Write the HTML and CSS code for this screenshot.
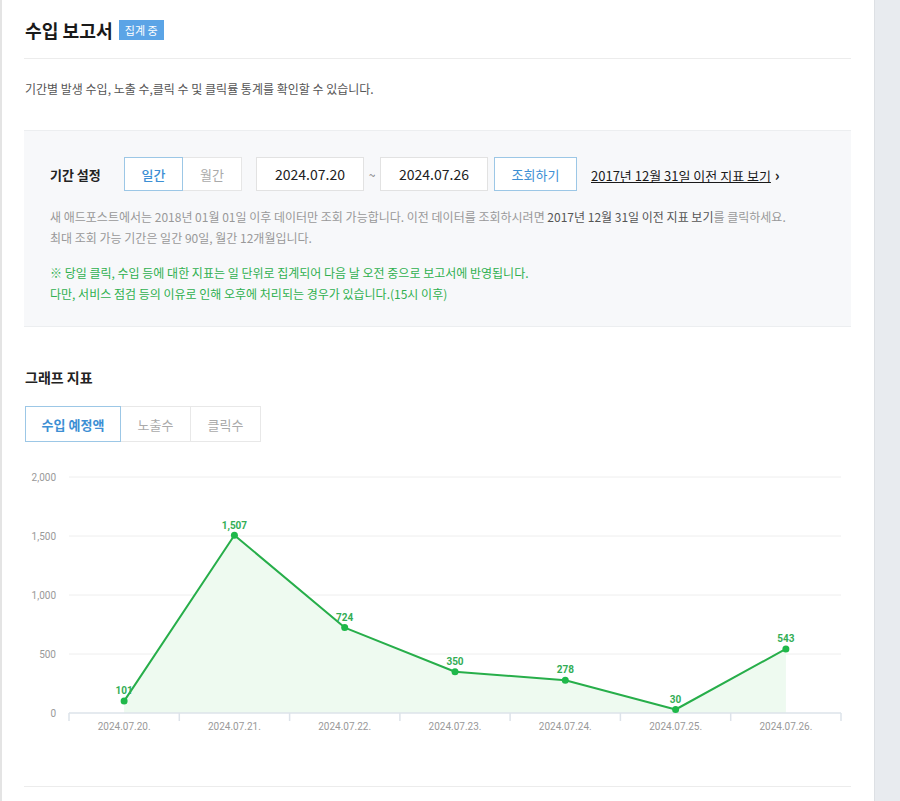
FILE: index.html
```html
<!DOCTYPE html>
<html>
<head>
    <meta charset="utf-8">
    <title>수입 보고서</title>
    <link rel="stylesheet" href="styles.css">
</head>
<body>
    <div class="page">
        <div class="content">
            <div class="report-header">
                <h1>수입 보고서</h1>
                <span class="badge">집계 중</span>
            </div>
            <p class="desc">기간별 발생 수입, 노출 수,클릭 수 및 클릭률 통계를 확인할 수 있습니다.</p>

            <div class="filter-box">
                <div class="filter-row">
                    <span class="filter-label">기간 설정</span>
                    <div class="toggle">
                        <button class="toggle-btn active">일간</button>
                        <button class="toggle-btn">월간</button>
                    </div>
                    <div class="date-range">
                        <div class="date-input">2024.07.20</div>
                        <span class="tilde">~</span>
                        <div class="date-input">2024.07.26</div>
                    </div>
                    <button class="search-btn">조회하기</button>
                    <a class="old-link" href="#"><span>2017년 12월 31일 이전 지표 보기</span> <b>›</b></a>
                </div>
                <div class="info">
                    <p>새 애드포스트에서는 2018년 01월 01일 이후 데이터만 조회 가능합니다. 이전 데이터를 조회하시려면 <em>2017년 12월 31일 이전 지표 보기</em>를 클릭하세요.</p>
                    <p>최대 조회 가능 기간은 일간 90일, 월간 12개월입니다.</p>
                </div>
                <div class="notice">
                    <p>※ 당일 클릭, 수입 등에 대한 지표는 일 단위로 집계되어 다음 날 오전 중으로 보고서에 반영됩니다.</p>
                    <p>다만, 서비스 점검 등의 이유로 인해 오후에 처리되는 경우가 있습니다.(15시 이후)</p>
                </div>
            </div>

            <h2 class="section-title">그래프 지표</h2>
            <div class="tabs">
                <button class="tab active">수입 예정액</button>
                <button class="tab">노출수</button>
                <button class="tab">클릭수</button>
            </div>

            <div class="chart">
                <svg width="827" height="280" viewBox="0 0 827 280">
                    <g class="grid">
                        <line x1="45" y1="17" x2="817" y2="17"/>
                        <line x1="45" y1="76" x2="817" y2="76"/>
                        <line x1="45" y1="135" x2="817" y2="135"/>
                        <line x1="45" y1="194" x2="817" y2="194"/>
                    </g>
                    <g class="y-labels">
                        <text x="32" y="21">2,000</text>
                        <text x="32" y="80">1,500</text>
                        <text x="32" y="139">1,000</text>
                        <text x="32" y="198">500</text>
                        <text x="32" y="257">0</text>
                    </g>
                    <polygon class="area" points="100.1,241.1 210.4,75.2 320.7,167.6 431,211.7 541.3,220.2 651.6,249.5 761.9,188.9 761.9,253 100.1,253"/>
                    <polyline class="line" points="100.1,241.1 210.4,75.2 320.7,167.6 431,211.7 541.3,220.2 651.6,249.5 761.9,188.9"/>
                    <g class="axis">
                        <line x1="45" y1="253" x2="817" y2="253"/>
                        <line x1="45" y1="253" x2="45" y2="261"/>
                        <line x1="155.3" y1="253" x2="155.3" y2="261"/>
                        <line x1="265.6" y1="253" x2="265.6" y2="261"/>
                        <line x1="375.9" y1="253" x2="375.9" y2="261"/>
                        <line x1="486.1" y1="253" x2="486.1" y2="261"/>
                        <line x1="596.4" y1="253" x2="596.4" y2="261"/>
                        <line x1="706.7" y1="253" x2="706.7" y2="261"/>
                        <line x1="817" y1="253" x2="817" y2="261"/>
                    </g>
                    <g class="dots">
                        <circle cx="100.1" cy="241.1" r="3.5"/>
                        <circle cx="210.4" cy="75.2" r="3.5"/>
                        <circle cx="320.7" cy="167.6" r="3.5"/>
                        <circle cx="431" cy="211.7" r="3.5"/>
                        <circle cx="541.3" cy="220.2" r="3.5"/>
                        <circle cx="651.6" cy="249.5" r="3.5"/>
                        <circle cx="761.9" cy="188.9" r="3.5"/>
                    </g>
                    <g class="values">
                        <text x="100.1" y="234">101</text>
                        <text x="210.4" y="69">1,507</text>
                        <text x="320.7" y="161">724</text>
                        <text x="431" y="205">350</text>
                        <text x="541.3" y="213">278</text>
                        <text x="651.6" y="243">30</text>
                        <text x="761.9" y="182">543</text>
                    </g>
                    <g class="x-labels">
                        <text x="100.1" y="270">2024.07.20.</text>
                        <text x="210.4" y="270">2024.07.21.</text>
                        <text x="320.7" y="270">2024.07.22.</text>
                        <text x="431" y="270">2024.07.23.</text>
                        <text x="541.3" y="270">2024.07.24.</text>
                        <text x="651.6" y="270">2024.07.25.</text>
                        <text x="761.9" y="270">2024.07.26.</text>
                    </g>
                </svg>
            </div>
            <div class="bottom-rule"></div>
        </div>
        <div class="side"></div>
    </div>
</body>
</html>
```

FILE: styles.css
```css
html, body {
    margin: 0;
    padding: 0;
    background: #ffffff;
}
body {
    font-family: "Noto Sans CJK KR", "Noto Sans", sans-serif;
    color: #222;
}
.page {
    display: flex;
    min-height: 801px;
}
.content {
    flex: 1;
    border-left: 2px solid #e4e4e4;
    padding: 0 23px 0 22px;
}
.side {
    width: 25px;
    background: #e8ebef;
    border-left: 1px solid #dde0e4;
}
.report-header {
    display: flex;
    align-items: center;
    padding: 16px 0 14px 1px;
    border-bottom: 1px solid #ececec;
}
h1 {
    margin: 0;
    font-size: 18.2px;
    line-height: 28px;
    font-weight: 700;
    color: #1a1a1a;
}
.badge {
    margin-left: 6px;
    height: 20px;
    line-height: 20px;
    padding: 0 6px;
    background: #5ba4e6;
    color: #fff;
    font-size: 11px;
}
.desc {
    margin: 21px 0 32px 1px;
    font-size: 12px;
    line-height: 18px;
    color: #555;
}
.filter-box {
    background: #f7f8fa;
    border-top: 1px solid #eceef0;
    border-bottom: 1px solid #eceef0;
    padding: 26px 26px 22px;
}
.filter-row {
    display: flex;
    align-items: center;
    height: 34px;
}
.filter-label {
    width: 74px;
    font-size: 13px;
    font-weight: 700;
    color: #222;
}
.toggle {
    display: flex;
}
button {
    font-family: inherit;
    cursor: pointer;
    background: #fff;
}
.toggle-btn {
    width: 59px;
    height: 34px;
    font-size: 13px;
    color: #aaa;
    border: 1px solid #e6e6e6;
    padding: 0;
}
.toggle-btn + .toggle-btn {
    border-left: none;
}
.toggle-btn.active {
    color: #3d8fd4;
    border-color: #9cc7e6;
    font-weight: 500;
}
.date-range {
    display: flex;
    align-items: center;
    margin-left: 14px;
}
.date-input {
    width: 106px;
    height: 32px;
    line-height: 32px;
    border: 1px solid #e2e2e2;
    background: #fff;
    text-align: center;
    font-size: 14px;
    color: #222;
}
.tilde {
    width: 16px;
    text-align: center;
    font-size: 12px;
    color: #777;
}
.search-btn {
    margin-left: 6px;
    width: 83px;
    height: 34px;
    font-size: 13px;
    color: #3d8fd4;
    border: 1px solid #9cc7e6;
    padding: 0;
}
.old-link {
    margin-left: 14px;
    font-size: 13px;
    font-weight: 400;
    color: #1a1a1a;
    text-decoration: none;
}
.old-link span {
    text-decoration: underline;
}
.old-link b {
    font-size: 15px;
    margin-left: 1px;
}
.info {
    margin-top: 15px;
}
.info p, .notice p {
    margin: 0;
    font-size: 12px;
    line-height: 21px;
}
.info p {
    color: #999;
}
.info em {
    font-style: normal;
    color: #555;
}
.notice {
    margin-top: 14px;
}
.notice p {
    color: #2fb04f;
}
.section-title {
    margin: 40px 0 0 1px;
    font-size: 14px;
    line-height: 20px;
    font-weight: 700;
    color: #222;
}
.tabs {
    display: flex;
    margin: 19px 0 0 1px;
}
.tab {
    height: 36px;
    font-size: 13px;
    color: #aaa;
    border: 1px solid #e8e8e8;
    padding: 0;
    width: 70px;
}
.tab + .tab {
    border-left: none;
}
.tab.active {
    width: 96px;
    color: #3d8fd4;
    font-weight: 700;
    border-color: #9cc7e6;
}
.chart {
    margin-top: 18px;
    height: 280px;
}
.chart svg {
    display: block;
    font-family: Roboto, "Noto Sans", sans-serif;
}
.grid line {
    stroke: #eeeeee;
    stroke-width: 1;
}
.axis line {
    stroke: #dde3ea;
    stroke-width: 1.5;
}
.y-labels text {
    font-size: 10px;
    fill: #999;
    text-anchor: end;
}
.x-labels text {
    font-size: 10px;
    fill: #999;
    text-anchor: middle;
}
.area {
    fill: #eefaf0;
}
.line {
    fill: none;
    stroke: #27ae4a;
    stroke-width: 2;
    stroke-linejoin: round;
}
.dots circle {
    fill: #1fb84a;
}
.values text {
    font-size: 10px;
    font-weight: 700;
    fill: #33ad55;
    text-anchor: middle;
}
.bottom-rule {
    margin-top: 46px;
    border-top: 1px solid #ececec;
}
```
